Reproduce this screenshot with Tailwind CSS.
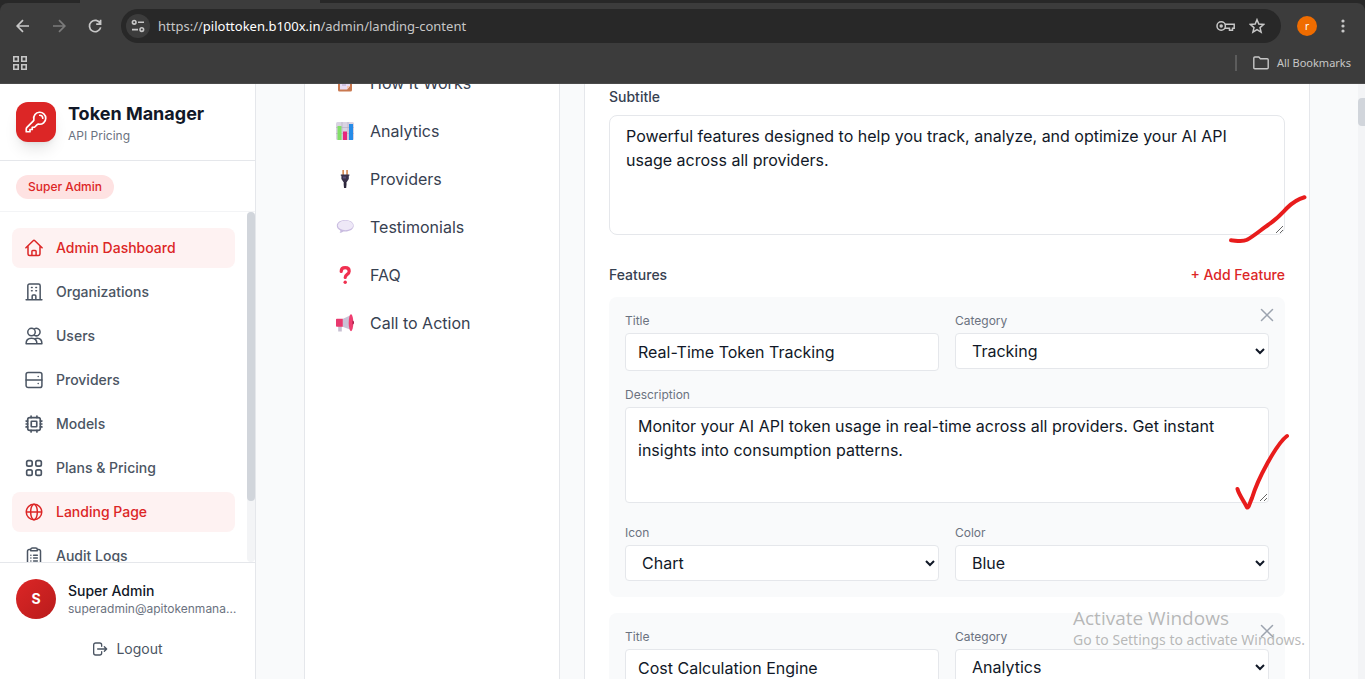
<!DOCTYPE html>
<html lang="en">
<head>
  <meta charset="UTF-8">
  <meta name="viewport" content="width=device-width, initial-scale=1.0">
  <title>Landing Content - Token Manager</title>
  <script src="https://cdn.jsdelivr.net/npm/@tailwindcss/browser@4"></script>
</head>
<body class="relative flex flex-col h-screen overflow-hidden bg-[#f9fafb] font-['Inter','Liberation_Sans',sans-serif] text-[#111827]">

  <!-- Browser bar -->
  <header class="shrink-0 bg-[#282828] font-['Noto_Sans','Open_Sans',sans-serif] text-[#c7c7c7]">
    <div class="flex h-[3px]">
      <div class="w-20 rounded-br-lg bg-[#282828]"></div>
      <div class="w-60 bg-[#3c3c3c]"></div>
    </div>
    <div class="rounded-t-lg border-b border-[#4a4a4a] bg-[#3c3c3c]">
      <div class="flex items-center h-[46px] pl-3.5 pr-[11px]">
        <button type="button" aria-label="Back" class="mr-[18px]">
          <svg class="size-[18px]" viewBox="0 0 18 18" fill="none" stroke="currentColor" stroke-width="1.7"><path d="M15 9H3.5M9 3.2 3.2 9 9 14.8"/></svg>
        </button>
        <button type="button" aria-label="Forward" class="mr-[18px] text-[#7b7b7b]">
          <svg class="size-[18px]" viewBox="0 0 18 18" fill="none" stroke="currentColor" stroke-width="1.7"><path d="M3 9h11.500M9 3.200 14.800 9 9 14.800"/></svg>
        </button>
        <button type="button" aria-label="Reload" class="mr-[17px]">
          <svg class="size-[18px]" viewBox="0 0 18 18" fill="none" stroke="currentColor" stroke-width="1.7"><path d="M14.300 6.500A5.700 5.700 0 1 0 14.700 10.400M14.600 2.800v4.400h-4.400"/></svg>
        </button>
        <div class="flex flex-1 items-center h-[34px] rounded-full bg-[#282828] pl-[5px] pr-4">
          <span class="flex size-6 shrink-0 items-center justify-center rounded-full bg-[#3c3c3c]">
            <svg class="size-3.5" viewBox="0 0 14 14" fill="none" stroke="currentColor" stroke-width="1.6"><circle cx="3.200" cy="3.300" r="1.800"/><path d="M7 3.300h6M1 10.600h6"/><circle cx="10.800" cy="10.600" r="1.800"/></svg>
          </span>
          <p class="ml-2 flex-1 text-[13px] leading-5">https://<span class="text-white">pilottoken.b100x.in</span>/admin/landing-content</p>
          <button type="button" aria-label="Passwords" class="mr-3.5">
            <svg class="h-3 w-[19px]" viewBox="0 0 19 12" fill="none" stroke="currentColor" stroke-width="1.500"><circle cx="5.200" cy="6" r="4.200"/><circle cx="5.200" cy="6" r="1" fill="currentColor"/><path d="M9 4.200h9.200v4h-1.700v2h-3v-2H9"/></svg>
          </button>
          <button type="button" aria-label="Bookmark this tab">
            <svg class="size-4" viewBox="0 0 16 16" fill="none" stroke="currentColor" stroke-width="1.500"><path d="m8 1.700 1.800 4.400 4.800.4-3.600 3.100 1.100 4.600L8 11.700l-4.100 2.500L5 9.600 1.400 6.500l4.800-.4z"/></svg>
          </button>
        </div>
        <button type="button" aria-label="Profile" class="ml-4 size-5 rounded-full bg-[#ef6c00] text-[10px] leading-5 text-white">r</button>
        <button type="button" aria-label="Menu" class="ml-[17px]">
          <svg class="size-5" viewBox="0 0 20 20" fill="currentColor"><circle cx="9" cy="5" r="1.600"/><circle cx="9" cy="10" r="1.600"/><circle cx="9" cy="15" r="1.600"/></svg>
        </button>
      </div>
      <div class="flex items-center h-[34px] pb-1.5 pl-3 pr-3.5">
        <button type="button" aria-label="Apps">
          <svg class="size-4" viewBox="0 0 16 16" fill="none" stroke="currentColor" stroke-width="1.600"><path d="M1.800 1.800h4.400v4.400H1.800zM9.800 1.800h4.400v4.400H9.800zM1.800 9.800h4.400v4.400H1.800zM9.800 9.800h4.400v4.400H9.800z"/></svg>
        </button>
        <span class="ml-auto mr-4 h-4 w-0.5 bg-[#5c5c5c]"></span>
        <button type="button" class="flex items-center gap-2 text-[11px] leading-4">
          <svg class="h-[14px] w-4" viewBox="0 0 16 14" fill="none" stroke="currentColor" stroke-width="1.400"><path d="M.8 2c0-.6.400-1 1-1h4l1.600 1.700h6.800c.6 0 1 .4 1 1v8.100c0 .6-.4 1-1 1H1.800c-.6 0-1-.4-1-1z"/></svg>
          All Bookmarks
        </button>
      </div>
    </div>
  </header>

  <div class="flex flex-1 min-h-0">

    <!-- Sidebar -->
    <aside class="flex w-64 shrink-0 flex-col border-r border-[#e5e7eb] bg-white">
      <div class="flex items-center gap-3 border-b border-[#e5e7eb] p-4">
        <div class="flex size-10 items-center justify-center rounded-xl bg-[#dc2626] text-white shadow-lg">
          <svg class="size-6" viewBox="0 0 24 24" fill="none" stroke="currentColor" stroke-width="1.700" stroke-linecap="round" stroke-linejoin="round"><path d="M15.750 5.250a3 3 0 0 1 3 3m3 0a6 6 0 0 1-7.029 5.912c-.563-.097-1.159.026-1.563.43L10.500 17.250H8.250v2.250H6v2.250H2.250v-2.818c0-.597.237-1.170.659-1.591l6.499-6.499c.404-.404.527-1 .43-1.563A6 6 0 1 1 21.750 8.250Z"/></svg>
        </div>
        <div>
          <h1 class="text-lg leading-7 font-bold">Token Manager</h1>
          <p class="text-xs text-[#6b7280]">API Pricing</p>
        </div>
      </div>
      <div class="flex border-b border-[#f3f4f6] px-4 pt-3.5 pb-3">
        <span class="rounded-full bg-[#fee2e2] px-3 py-1 text-xs font-medium text-[#dc2626]">Super Admin</span>
      </div>

      <div class="flex flex-1 min-h-0">
        <nav class="flex flex-1 flex-col gap-1 overflow-hidden px-3 py-4 text-sm font-medium text-[#4b5563]">
          <a href="#" class="flex shrink-0 items-center gap-3 rounded-lg bg-[#fef2f2] px-3 py-2.5 text-[#dc2626]">
            <svg class="size-5" viewBox="0 0 24 24" fill="none" stroke="currentColor" stroke-width="1.800" stroke-linecap="round" stroke-linejoin="round"><path d="M2.300 11.800 11 3.200a1.400 1.400 0 0 1 2 0l8.700 8.600M4.800 9.600V19a2 2 0 0 0 2 2h10.400a2 2 0 0 0 2-2V9.600M9.500 21v-5a1 1 0 0 1 1-1h3a1 1 0 0 1 1 1v5"/></svg>
            Admin Dashboard
          </a>
          <a href="#" class="flex shrink-0 items-center gap-3 rounded-lg px-3 py-2.5">
            <svg class="size-5" viewBox="0 0 24 24" fill="none" stroke="currentColor" stroke-width="1.800" stroke-linecap="round" stroke-linejoin="round"><path d="M2.500 21.300h19M4.600 21.300V4.400a2 2 0 0 1 2-2h10.800a2 2 0 0 1 2 2v16.900M9 6.600h.8M14.200 6.600h.8M9 10.400h.8M14.200 10.400h.8M9.800 21.300v-4.600a1.200 1.200 0 0 1 1.200-1.200h2a1.200 1.200 0 0 1 1.200 1.200v4.600"/></svg>
            Organizations
          </a>
          <a href="#" class="flex shrink-0 items-center gap-3 rounded-lg px-3 py-2.5">
            <svg class="size-5" viewBox="0 0 24 24" fill="none" stroke="currentColor" stroke-width="1.800" stroke-linecap="round" stroke-linejoin="round"><circle cx="9" cy="7.300" r="4.500"/><path d="M12.600 3.400a4.500 4.500 0 1 1 0 7.800M2.500 21.300c0-4 2.600-6.500 6.500-6.500s6.500 2.500 6.500 6.500zM13 15.600c1-.6 2.100-.8 3-.8 3.500 0 5.500 2.700 5.500 6.500h-6"/></svg>
            Users
          </a>
          <a href="#" class="flex shrink-0 items-center gap-3 rounded-lg px-3 py-2.5">
            <svg class="size-5" viewBox="0 0 24 24" fill="none" stroke="currentColor" stroke-width="1.800" stroke-linecap="round" stroke-linejoin="round"><rect x="2.500" y="3" width="19" height="18" rx="2.500"/><path d="M2.500 12h19M17 7.700h.1M17 16.200h.1"/></svg>
            Providers
          </a>
          <a href="#" class="flex shrink-0 items-center gap-3 rounded-lg px-3 py-2.5">
            <svg class="size-5" viewBox="0 0 24 24" fill="none" stroke="currentColor" stroke-width="2" stroke-linecap="round" stroke-linejoin="round"><rect x="4.400" y="4.400" width="15.200" height="15.200" rx="2.500"/><rect x="8.700" y="8.700" width="6.600" height="6.600" rx=".5"/><path d="M8.500 4.500v-2M15.500 4.500v-2M8.500 21.500v-2M15.500 21.500v-2M4.500 8.500h-2M4.500 15.500h-2M21.500 8.500h-2M21.500 15.500h-2M4.500 12h-2M21.500 12h-2"/></svg>
            Models
          </a>
          <a href="#" class="flex shrink-0 items-center gap-3 rounded-lg px-3 py-2.5">
            <svg class="size-5" viewBox="0 0 24 24" fill="none" stroke="currentColor" stroke-width="2"><rect x="3.200" y="3.200" width="6.600" height="6.600" rx="2"/><rect x="14.200" y="3.200" width="6.600" height="6.600" rx="2"/><rect x="3.200" y="14.200" width="6.600" height="6.600" rx="2"/><rect x="14.200" y="14.200" width="6.600" height="6.600" rx="2"/></svg>
            Plans &amp; Pricing
          </a>
          <a href="#" class="flex shrink-0 items-center gap-3 rounded-lg bg-[#fef2f2] px-3 py-2.5 text-[#dc2626]">
            <svg class="size-5" viewBox="0 0 24 24" fill="none" stroke="currentColor" stroke-width="1.800"><circle cx="12" cy="12" r="9.300"/><ellipse cx="12" cy="12" rx="4" ry="9.300"/><path d="M2.700 12h18.600"/></svg>
            Landing Page
          </a>
          <a href="#" class="flex shrink-0 items-center gap-3 rounded-lg px-3 py-2.5">
            <svg class="size-5" viewBox="0 0 24 24" fill="none" stroke="currentColor" stroke-width="1.800" stroke-linecap="round" stroke-linejoin="round"><path d="M8 4.300H6.200a2 2 0 0 0-2 2v13.200a2 2 0 0 0 2 2h11.600a2 2 0 0 0 2-2V6.300a2 2 0 0 0-2-2H16M10 2.500h4a2 2 0 0 1 2 2v1.200H8V4.500a2 2 0 0 1 2-2zM8.200 11h.1M8.200 14.500h.1M8.200 18h.1M11.500 11H16M11.500 14.500H16M11.500 18H16"/></svg>
            Audit Logs
          </a>
        </nav>
        <div class="w-2 rounded-full bg-[#f3f4f6]">
          <div class="h-[289px] rounded-full bg-[#d1d5db]"></div>
        </div>
      </div>

      <div class="border-t border-[#e5e7eb] px-4 pt-4 pb-3">
        <div class="flex items-center gap-3">
          <div class="flex size-10 shrink-0 items-center justify-center rounded-full bg-linear-to-br from-[#dc2626] to-[#b91c1c] text-sm font-bold text-white">S</div>
          <div class="min-w-0">
            <p class="text-sm font-medium">Super Admin</p>
            <p class="truncate text-xs text-[#6b7280]">superadmin@apitokenmanager.com</p>
          </div>
        </div>
        <button type="button" class="mt-3 flex w-full items-center justify-center gap-2 py-2 text-sm text-[#4b5563]">
          <svg class="size-4" viewBox="0 0 24 24" fill="none" stroke="currentColor" stroke-width="2" stroke-linecap="round" stroke-linejoin="round"><path d="M14.500 8V6a3 3 0 0 0-3-3H5.500a3 3 0 0 0-3 3v12a3 3 0 0 0 3 3h6a3 3 0 0 0 3-3v-2M8.500 12H22M18.500 8.500 22 12l-3.500 3.500"/></svg>
          Logout
        </button>
      </div>
    </aside>

    <!-- Content, scrolled down to the features section -->
    <main class="flex flex-1 min-w-0 gap-6 overflow-hidden px-12">
      <div class="w-64 shrink-0 border-x border-[#e5e7eb] bg-white px-[15px]">
        <ul class="-mt-[25px] text-base text-[#374151]">
          <li><a href="#" class="flex items-center gap-4 px-4 py-3">
            <svg class="size-[18px]" viewBox="0 0 18 18"><rect x="2" y="1" width="14" height="16.500" rx="1.500" fill="#c9784f"/><path d="M4 3h10v9l-3 3.500H4z" fill="#e8dcf5"/><path d="M14 12h-3v3.500z" fill="#f9c8b4"/><path d="M6 6h6M6 8.500h6M6 11h4" stroke="#a695bd" stroke-width=".8"/></svg>
            How It Works</a></li>
          <li><a href="#" class="flex items-center gap-4 px-4 py-3">
            <svg class="size-[18px]" viewBox="0 0 18 18"><rect width="18" height="18" rx="1.500" fill="#d9d3e2"/><path d="M0 5.500h18M0 11.500h18M6 0v18M12 0v18" stroke="#b8b0c5" stroke-width=".7"/><path d="M1.500 4h4v14h-4z" fill="#82df68"/><path d="M7 9.500h4V18H7z" fill="#e6257c"/><path d="M13 2h4v16h-4z" fill="#258be8"/></svg>
            Analytics</a></li>
          <li><a href="#" class="flex items-center gap-4 px-4 py-3">
            <svg class="size-[18px]" viewBox="0 0 18 18"><path d="M6.300 0h1.700v5H6.300zM10.200 0h1.700v5h-1.700z" fill="#d6905d"/><path d="M4.800 4.500h8.600v1.300h-.6V9l-2 3H7.400l-2-3V5.800h-.6z" fill="#39324a"/><path d="M7.700 12h2.800v2.500l-.3 3.500H8l-.3-3.500z" fill="#2c263b"/><path d="M7 6.500h3v2H7z" fill="#594f76"/></svg>
            Providers</a></li>
          <li><a href="#" class="flex items-center gap-4 px-4 py-3">
            <svg class="size-[18px]" viewBox="0 0 18 18"><path d="M9.200 2c4.800 0 8.500 2.400 8.500 5.800s-3.700 5.800-8.500 5.800l-1.800-.1c-1 .9-2.400 1.300-3.900 1.300.8-.7 1-1.500.8-2.400C2.200 11.400.8 9.800.8 7.800.8 4.400 4.400 2 9.200 2z" fill="#c9bce0"/><ellipse cx="9.500" cy="7.400" rx="7.600" ry="4.900" fill="#eee8f7"/></svg>
            Testimonials</a></li>
          <li><a href="#" class="flex items-center gap-4 px-4 py-3">
            <svg class="size-[18px]" viewBox="0 0 18 18"><path d="M5.200 5.500C5.200 3 6.800 1.700 9.200 1.700s4 1.300 4 3.500c0 3.300-4 3-4 6.300" fill="none" stroke="#f03050" stroke-width="3.200" stroke-linecap="round"/><circle cx="9.200" cy="16.300" r="1.700" fill="#f03050"/></svg>
            FAQ</a></li>
          <li><a href="#" class="flex items-center gap-4 px-4 py-3">
            <svg class="size-[18px]" viewBox="0 0 18 18"><path d="M2.200 12h3.600v5.500H2.200z" fill="#c8c0d2"/><path d="M6.500 5 14 1.500v14L6.500 12.700z" fill="#c9c2d6"/><path d="M0 5.500c0-.5.300-.8.800-.8h6v8h-6c-.5 0-.8-.3-.8-.8z" fill="#e8386e"/><ellipse cx="15" cy="8.700" rx="2.300" ry="8.500" fill="#ef3e70"/><path d="M16.500 6.500c2 .2 2 4 0 4.200z" fill="#a51d49"/></svg>
            Call to Action</a></li>
        </ul>
      </div>

      <section class="flex-1 min-w-0 border-x border-[#e5e7eb] bg-white px-6 pt-[3px]">
        <label for="subtitle" class="mb-2 block text-sm font-medium text-[#374151]">Subtitle</label>
        <textarea id="subtitle" class="block h-[120px] w-full rounded-lg border border-[#e5e7eb] px-4 py-2 text-base">Powerful features designed to help you track, analyze, and optimize your AI API usage across all providers.</textarea>

        <div class="mt-[30px] mb-3 flex items-center justify-between text-sm font-medium">
          <h2 class="text-[#374151]">Features</h2>
          <button type="button" class="text-[#dc2626]">+ Add Feature</button>
        </div>

        <div class="flex flex-col gap-4">
          <div class="relative rounded-lg bg-[#f9fafb] p-4">
            <button type="button" aria-label="Remove feature" class="absolute top-2 right-2 text-[#9ca3af]">
              <svg class="size-5" viewBox="0 0 20 20" fill="none" stroke="currentColor" stroke-width="1.500" stroke-linecap="round"><path d="m4.500 4.500 11 11M15.500 4.500l-11 11"/></svg>
            </button>
            <div class="grid grid-cols-2 items-start gap-4">
              <div>
                <label for="title-1" class="mb-1 block text-xs text-[#6b7280]">Title</label>
                <input id="title-1" type="text" value="Real-Time Token Tracking" class="block w-full rounded border border-[#e5e7eb] bg-white px-3 py-1.5 text-base">
              </div>
              <div>
                <label for="category-1" class="mb-1 block text-xs text-[#6b7280]">Category</label>
                <select id="category-1" class="block h-9 w-full rounded border border-[#e5e7eb] bg-white px-3 text-base"><option>Tracking</option><option>Analytics</option></select>
              </div>
              <div class="col-span-2">
                <label for="description-1" class="mb-1 block text-xs text-[#6b7280]">Description</label>
                <textarea id="description-1" class="mb-1.5 block h-24 w-full rounded border border-[#e5e7eb] bg-white px-3 py-1.5 text-base">Monitor your AI API token usage in real-time across all providers. Get instant insights into consumption patterns.</textarea>
              </div>
              <div>
                <label for="icon-1" class="mb-1 block text-xs text-[#6b7280]">Icon</label>
                <select id="icon-1" class="block h-9 w-full rounded border border-[#e5e7eb] bg-white px-3 text-base"><option>Chart</option></select>
              </div>
              <div>
                <label for="color-1" class="mb-1 block text-xs text-[#6b7280]">Color</label>
                <select id="color-1" class="block h-9 w-full rounded border border-[#e5e7eb] bg-white px-3 text-base"><option>Blue</option></select>
              </div>
            </div>
          </div>

          <div class="relative rounded-lg bg-[#f9fafb] p-4">
            <button type="button" aria-label="Remove feature" class="absolute top-2 right-2 text-[#9ca3af]">
              <svg class="size-5" viewBox="0 0 20 20" fill="none" stroke="currentColor" stroke-width="1.500" stroke-linecap="round"><path d="m4.500 4.500 11 11M15.500 4.500l-11 11"/></svg>
            </button>
            <div class="grid grid-cols-2 items-start gap-4">
              <div>
                <label for="title-2" class="mb-1 block text-xs text-[#6b7280]">Title</label>
                <input id="title-2" type="text" value="Cost Calculation Engine" class="block w-full rounded border border-[#e5e7eb] bg-white px-3 py-1.5 text-base">
              </div>
              <div>
                <label for="category-2" class="mb-1 block text-xs text-[#6b7280]">Category</label>
                <select id="category-2" class="block h-9 w-full rounded border border-[#e5e7eb] bg-white px-3 text-base"><option>Analytics</option><option>Tracking</option></select>
              </div>
            </div>
          </div>
        </div>
      </section>
    </main>

    <!-- Page scrollbar -->
    <div class="w-[7px] bg-[#f3f4f6] pt-3.5">
      <div class="h-7 rounded-l bg-[#d1d5db]"></div>
    </div>
  </div>

  <!-- Pen marks -->
  <svg class="pointer-events-none absolute top-[190px] right-[55px] h-[325px] w-[85px]" viewBox="0 0 85 325" fill="none" stroke="#e81c1c" stroke-width="4" stroke-linecap="round" stroke-linejoin="round">
    <path d="M6 50.300C11 50.500 17 52.300 22 49.800C29 46 37 39 43 35C52 29 57 23 62 18C69 11 73 9 79.500 7.200"/>
    <path d="M12.500 299C14 305 19 311 22 317.500C24 318 25 312 27 308C31 295 37 283 42 274C47 265 54 252 62 246"/>
  </svg>

  <!-- Activation notice -->
  <div class="pointer-events-none absolute right-14 bottom-[29px] w-[236px] whitespace-nowrap font-['Noto_Sans','Open_Sans',sans-serif] text-[#8a8a8a]/60">
    <p class="font-['Open_Sans','Noto_Sans',sans-serif] text-[19px] leading-6">Activate Windows</p>
    <p class="text-sm leading-5">Go to Settings to activate Windows.</p>
  </div>
</body>
</html>
